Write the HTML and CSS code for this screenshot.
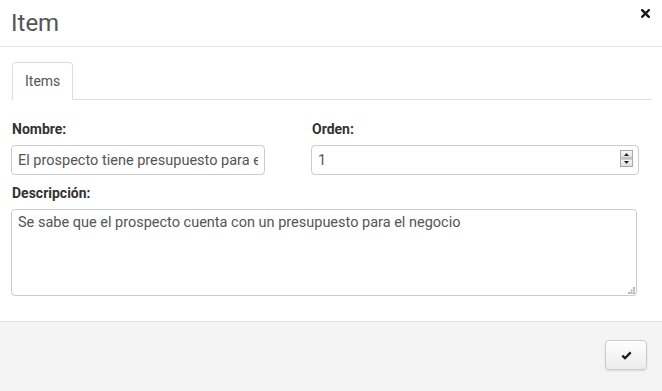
FILE: index.html
```html
<!DOCTYPE html>
<html lang="es">
<head>
<meta charset="utf-8">
<title>Item</title>
<link rel="stylesheet" href="styles.css">
</head>
<body>
<div class="modal">
  <div class="modal-header">
    <h4 class="modal-title">Item</h4>
    <button class="close" type="button" aria-label="Cerrar">
      <svg width="9" height="9" viewBox="0 0 9 9"><path d="M1.2 1.2 L7.8 7.8 M7.8 1.2 L1.2 7.8" stroke="#1a1a1a" stroke-width="2.4" stroke-linecap="square"/></svg>
    </button>
  </div>
  <div class="modal-body">
    <ul class="tabs">
      <li class="tab active">Items</li>
    </ul>
    <div class="tab-content">
      <div class="row">
        <div class="field">
          <label class="label" for="nombre">Nombre:</label>
          <input class="input" id="nombre" type="text" value="El prospecto tiene presupuesto para el negocio">
        </div>
        <div class="field">
          <label class="label" for="orden">Orden:</label>
          <div class="number">
            <input class="input" id="orden" type="text" value="1">
            <span class="spinner">
              <svg width="13" height="17" viewBox="0 0 13 17">
                <defs><linearGradient id="g" x1="0" y1="0" x2="0" y2="1"><stop offset="0" stop-color="#fbfbfb"/><stop offset="1" stop-color="#dcdcdc"/></linearGradient></defs>
                <rect x="0.5" y="0.5" width="12" height="7.5" fill="url(#g)" stroke="#a8a8a8"/>
                <rect x="0.5" y="9" width="12" height="7.5" fill="url(#g)" stroke="#a8a8a8"/>
                <path d="M4 6 L6.5 3 L9 6 Z" fill="#222"/>
                <path d="M4 11 L9 11 L6.5 14 Z" fill="#222"/>
              </svg>
            </span>
          </div>
        </div>
      </div>
      <div class="field">
        <label class="label" for="desc">Descripción:</label>
        <div class="area-wrap">
          <textarea class="textarea" id="desc">Se sabe que el prospecto cuenta con un presupuesto para el negocio</textarea>
          <span class="grip">
            <svg width="7" height="7" viewBox="0 0 7 7" fill="#b5b5b5">
              <rect x="5" y="0" width="2" height="2"/>
              <rect x="2.5" y="2.5" width="2" height="2"/><rect x="5" y="2.5" width="2" height="2"/>
              <rect x="0" y="5" width="2" height="2"/><rect x="2.5" y="5" width="2" height="2"/><rect x="5" y="5" width="2" height="2"/>
            </svg>
          </span>
        </div>
      </div>
    </div>
  </div>
  <div class="modal-footer">
    <button class="btn" type="button" aria-label="Guardar">
      <svg width="11" height="9" viewBox="0 0 11 9"><path d="M1.3 4.6 L4 7.2 L9.7 1.4" fill="none" stroke="#1a1a1a" stroke-width="2.3"/></svg>
    </button>
  </div>
</div>
</body>
</html>
```
FILE: styles.css
```css
* { box-sizing: border-box; }
html, body { margin: 0; padding: 0; background: #fff; }
body {
  font-family: Roboto, "Liberation Sans", Arial, sans-serif;
  font-size: 14px;
  color: #333;
  width: 662px;
  height: 391px;
  overflow: hidden;
}
.modal { display: flex; flex-direction: column; height: 391px; }
.modal-header {
  position: relative;
  height: 47px;
  padding: 9px 11px 0 11px;
  border-bottom: 1px solid #e5e5e5;
}
.modal-title {
  margin: 0;
  font-size: 24px;
  line-height: 28px;
  font-weight: 400;
  color: #555;
}
.close {
  position: absolute;
  top: 9px;
  right: 12px;
  padding: 0;
  border: 0;
  background: transparent;
  line-height: 0;
}
.modal-body {
  padding: 15px 10px 0 11px;
  height: 274px;
}
.tabs {
  list-style: none;
  margin: 0;
  padding: 0 0 0 1px;
  display: flex;
  border-bottom: 1px solid #ddd;
}
.tab {
  margin-bottom: -1px;
  padding: 8px 12px;
  line-height: 20px;
  color: #555;
  background: #fff;
  border: 1px solid #ddd;
  border-bottom-color: #fff;
  border-radius: 4px 4px 0 0;
}
.tab-content { padding-top: 19px; }
.row {
  display: grid;
  grid-template-columns: 254px 328px;
  column-gap: 46px;
  margin-bottom: 8px;
}
.field { display: flex; flex-direction: column; }
.label {
  display: block;
  font-weight: 700;
  line-height: 20px;
  margin: 0 0 6px 1px;
  color: #333;
}
.input {
  display: block;
  width: 100%;
  height: 30px;
  margin: 0;
  padding: 0 6px;
  font-family: inherit;
  font-size: 14.5px;
  line-height: 28px;
  border: 1px solid #ccc;
  border-radius: 4px;
  color: #555;
  background: #fff;
  outline: none;
}
.number { position: relative; }
.spinner {
  position: absolute;
  right: 6px;
  top: 5px;
  line-height: 0;
}
.area-wrap { position: relative; width: 626px; height: 87px; }
.textarea {
  display: block;
  width: 626px;
  height: 87px;
  margin: 0;
  padding: 3px 6px;
  font-family: inherit;
  font-size: 14.5px;
  line-height: 20px;
  border: 1px solid #ccc;
  border-radius: 4px;
  color: #555;
  resize: none;
  outline: none;
  overflow: hidden;
}
.grip {
  position: absolute;
  right: 2px;
  bottom: 2px;
  line-height: 0;
}
.modal-footer {
  flex: 1;
  display: flex;
  justify-content: flex-end;
  align-items: flex-start;
  padding: 18px 15px 0 0;
  background: #f4f4f4;
  border-top: 1px solid #e1e1e1;
}
.btn {
  width: 42px;
  height: 30px;
  padding: 0;
  display: flex;
  align-items: center;
  justify-content: center;
  border: 1px solid #ccc;
  border-radius: 4px;
  background: linear-gradient(#fff, #ebebeb);
  box-shadow: 0 1px 2px rgba(0,0,0,0.12);
}
```
